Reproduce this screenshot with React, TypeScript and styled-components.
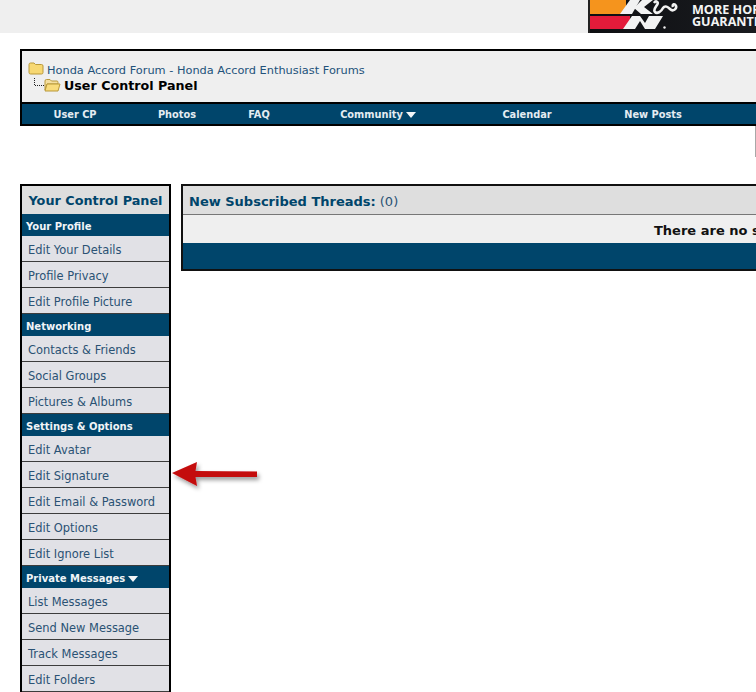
import React from 'react';
import styled, { createGlobalStyle } from 'styled-components';

const Global = createGlobalStyle`
  html, body { margin: 0; padding: 0; background: #fff; overflow: hidden; width: 756px; height: 692px; }
  body { font-family: "DejaVu Sans", Verdana, sans-serif; font-size: 11px; color: #22405a; }
`;

const Page = styled.div`
  width: 1000px;
  height: 692px;
  overflow: hidden;
  display: flex;
  flex-direction: column;
`;

const TopBar = styled.header`
  height: 33px;
  background: #efefef;
  display: flex;
  padding-left: 588px;
  margin-bottom: 16px;
`;

const Banner = styled.div`
  width: 412px;
  height: 33px;
  box-sizing: border-box;
  background: linear-gradient(90deg, #0e0f12, #2a2d33);
  display: flex;
  align-items: flex-start;
  border-left: 2px solid #222;
`;

const LogoSvg = styled.svg`
  display: block;
  flex: none;
`;

const Slogan = styled.div`
  margin-left: 2px;
  padding-top: 4px;
  font-family: "Open Sans", "Liberation Sans", sans-serif;
  font-weight: 700;
  font-size: 12.6px;
  line-height: 12px;
  color: #f4f4f4;
  white-space: nowrap;
`;

const NavBox = styled.section`
  margin-left: 20px;
  border: 2px solid #000;
  background: #efefef;
`;

const Crumbs = styled.div`
  height: 51px;
  box-sizing: border-box;
  padding: 11px 0 0 6px;
`;

const CrumbRow = styled.div`
  display: flex;
  align-items: center;
  height: 16px;
  gap: 3px;
  white-space: nowrap;
  color: #22527a;
  font-size: 11.35px;
`;

const FolderIcon = styled.svg<{ $lift: number }>`
  flex: none;
  margin-top: ${(p) => -p.$lift}px;
`;

const CrumbCurrent = styled.div`
  display: flex;
  align-items: center;
  gap: 3px;
  height: 15px;
  padding-left: 5px;
  white-space: nowrap;
  color: #000;
  font-weight: 700;
  font-size: 12.7px;
`;

const NavBar = styled.nav`
  box-sizing: border-box;
  border-top: 2px solid #000;
  background: #00456b;
  display: grid;
  grid-template-columns: 106px 98px 66px 172px 126px 126px 1fr;
  height: 22px;
`;

const NavItem = styled.a`
  display: flex;
  align-items: center;
  justify-content: center;
  gap: 3px;
  padding-top: 1px;
  color: #e4ecf2;
  font-weight: 700;
  font-size: 9.8px;
  white-space: nowrap;
`;

const Caret = styled.span`
  display: inline-block;
  width: 0;
  height: 0;
  border-left: 5px solid transparent;
  border-right: 5px solid transparent;
  border-top: 6px solid #f2f6f8;
  margin-top: 1px;
`;

const Gutter = styled.div`
  height: 59px;
  display: flex;
  padding-left: 755px;
`;

const GutterRule = styled.div`
  width: 1px;
  height: 31px;
  background: #a8a8a8;
`;

const Columns = styled.div`
  margin-left: 20px;
  display: flex;
  align-items: flex-start;
  gap: 10px;
`;

const Sidebar = styled.aside`
  position: relative;
  width: 151px;
  flex: none;
  box-sizing: border-box;
  border: 2px solid #000;
  border-bottom: 0;
  background: #e1e1e6;
`;

const SideTitle = styled.div`
  height: 28px;
  box-sizing: border-box;
  padding-top: 1px;
  display: flex;
  align-items: center;
  justify-content: center;
  background: #dedede;
  color: #00456b;
  font-weight: 700;
  font-size: 12.8px;
  white-space: nowrap;
`;

const SideHead = styled.div`
  height: 22px;
  box-sizing: border-box;
  padding: 2px 0 0 4px;
  display: flex;
  align-items: center;
  gap: 3px;
  background: #00456b;
  color: #f0f4f7;
  font-weight: 700;
  font-size: 10px;
  white-space: nowrap;
`;

const SideItem = styled.a`
  height: 26px;
  box-sizing: border-box;
  padding: 3px 0 0 6px;
  display: flex;
  align-items: center;
  background: #e1e1e6;
  color: #2a5274;
  font-size: 11.45px;
  border-bottom: 1px solid #3c3c3c;
  white-space: nowrap;
  &:last-child { border-bottom: 0; }
`;

const ArrowSvg = styled.svg`
  position: absolute;
  left: 149px;
  top: 268px;
  overflow: visible;
`;

const Main = styled.main`
  flex: 1;
  border: 2px solid #111;
  background: #efefef;
`;

const MainHead = styled.div`
  height: 29px;
  box-sizing: border-box;
  padding: 2px 0 0 6px;
  display: flex;
  align-items: center;
  gap: 4px;
  background: #dedede;
  border-bottom: 1px solid #777;
  font-size: 13px;
  white-space: nowrap;
`;

const MainTitle = styled.span`
  color: #00456b;
  font-weight: 700;
`;

const MainCount = styled.span`
  color: #2a5274;
`;

const MainBody = styled.div`
  height: 28px;
  box-sizing: border-box;
  padding: 2px 0 0 471px;
  display: flex;
  align-items: center;
  color: #111;
  font-weight: 700;
  font-size: 13px;
  white-space: nowrap;
`;

const MainFoot = styled.div`
  height: 26px;
  background: #00456b;
`;

function ClosedFolder() {
  return (
    <FolderIcon $lift={4} width="16" height="13" viewBox="0 0 16 13">
      <path d="M1 2.5 Q1 1 2.5 1 H6 L7.5 2.5 H13.5 Q15 2.5 15 4 V10.5 Q15 12 13.5 12 H2.5 Q1 12 1 10.5 Z" fill="#f7d873" stroke="#b9993a" strokeWidth="1" />
    </FolderIcon>
  );
}

function OpenFolder() {
  return (
    <FolderIcon $lift={1} width="28" height="14" viewBox="0 0 28 14">
      <path d="M1.5 0 V7.5 H11" fill="none" stroke="#222" strokeWidth="1" strokeDasharray="1 1" />
      <path d="M12 3 Q12 1.5 13.5 1.5 H17 L18.5 3 H24 Q25 3 25 4.5 V6 H14 L12 12 Z" fill="#f4dfa0" stroke="#b9993a" strokeWidth="1" />
      <path d="M14 6 H27 L25 13 H12 Z" fill="#f9dc7c" stroke="#b9993a" strokeWidth="1" />
    </FolderIcon>
  );
}

function KnLogo() {
  return (
    <LogoSvg width="100" height="33" viewBox="0 0 100 33">
      <rect x="0" y="0" width="36" height="14" fill="#f5941d" />
      <rect x="0" y="16" width="40" height="13" fill="#e31b3a" />
      <path d="M30 14 L40 0 H50 L42 14 Z" fill="#f2f2f2" />
      <path d="M44 8 L52 0 H63 L54 7 L63 14 H51 Z" fill="#f2f2f2" />
      <path d="M33 29 L42 16 H50 L55 23 L59 16 H73 L65 29 H55 L50 21 L45 29 Z" fill="#f2f2f2" />
      <path d="M64 3 C66 0 69 2 67 5 C65 8 63 10 65 12 C67 14 71 12 73 8 C75 5 78 7 80 9 C83 12 87 9 86 6 C85 3 82 4 83 7" fill="none" stroke="#f2f2f2" strokeWidth="2.6" />
      <circle cx="74.5" cy="27.5" r="1.2" fill="#f2f2f2" />
    </LogoSvg>
  );
}

type Section = { head: string; caret?: boolean; items: string[] };

const sections: Section[] = [
  { head: 'Your Profile', items: ['Edit Your Details', 'Profile Privacy', 'Edit Profile Picture'] },
  { head: 'Networking', items: ['Contacts & Friends', 'Social Groups', 'Pictures & Albums'] },
  { head: 'Settings & Options', items: ['Edit Avatar', 'Edit Signature', 'Edit Email & Password', 'Edit Options', 'Edit Ignore List'] },
  { head: 'Private Messages', caret: true, items: ['List Messages', 'Send New Message', 'Track Messages', 'Edit Folders'] },
];

export default function App() {
  return (
    <Page>
      <Global />
      <TopBar>
        <Banner>
          <KnLogo />
          <Slogan>MORE HORSEPOWER<br />GUARANTEED</Slogan>
        </Banner>
      </TopBar>
      <NavBox>
        <Crumbs>
          <CrumbRow><ClosedFolder /><span>Honda Accord Forum - Honda Accord Enthusiast Forums</span></CrumbRow>
          <CrumbCurrent><OpenFolder /><span>User Control Panel</span></CrumbCurrent>
        </Crumbs>
        <NavBar>
          <NavItem>User CP</NavItem>
          <NavItem>Photos</NavItem>
          <NavItem>FAQ</NavItem>
          <NavItem>Community <Caret /></NavItem>
          <NavItem>Calendar</NavItem>
          <NavItem>New Posts</NavItem>
        </NavBar>
      </NavBox>
      <Gutter><GutterRule /></Gutter>
      <Columns>
        <Sidebar>
          <SideTitle>Your Control Panel</SideTitle>
          {sections.map((s) => (
            <React.Fragment key={s.head}>
              <SideHead>{s.head}{s.caret && <Caret />}</SideHead>
              {s.items.map((i) => <SideItem key={i}>{i}</SideItem>)}
            </React.Fragment>
          ))}
          <ArrowSvg width="90" height="36" viewBox="0 0 90 36">
            <defs>
              <filter id="arrowShadow" x="-20%" y="-40%" width="140%" height="200%">
                <feDropShadow dx="2" dy="3" stdDeviation="2" floodColor="#000" floodOpacity="0.4" />
              </filter>
            </defs>
            <path d="M1 19 L26 8 L24.5 17 L86 17.5 V23 L24.5 23 L26 32 Z" fill="#c40a0c" filter="url(#arrowShadow)" />
          </ArrowSvg>
        </Sidebar>
        <Main>
          <MainHead><MainTitle>New Subscribed Threads:</MainTitle><MainCount>(0)</MainCount></MainHead>
          <MainBody>There are no subscribed threads to display.</MainBody>
          <MainFoot />
        </Main>
      </Columns>
    </Page>
  );
}
